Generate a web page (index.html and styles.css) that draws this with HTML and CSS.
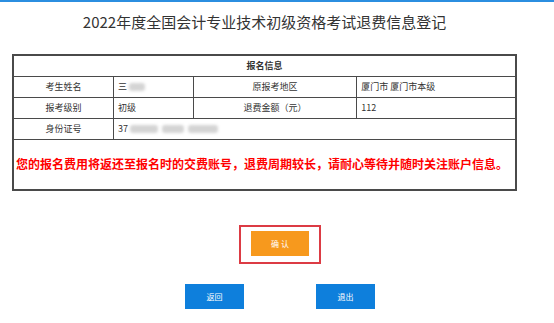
FILE: index.html
```html
<!DOCTYPE html>
<html lang="zh-CN">
  <head>
    <meta charset="UTF-8" />
    <meta name="viewport" content="width=device-width, initial-scale=1.0" />
    <title>退费信息登记</title>
    <link rel="stylesheet" href="styles.css">
  </head>
  <body>
    <div class="topbar"></div>
    <div class="page">
      <h1>2022年度全国会计专业技术初级资格考试退费信息登记</h1>
      <table class="info-table">
        <tr class="head-row">
          <td colspan="4">报名信息</td>
        </tr>
        <tr>
          <td class="label c1">考生姓名</td>
          <td class="c2">三<span class="blur w1"></span></td>
          <td class="label c3">原报考地区</td>
          <td class="c4">厦门市 厦门市本级</td>
        </tr>
        <tr>
          <td class="label">报考级别</td>
          <td>初级</td>
          <td class="label">退费金额（元）</td>
          <td>112</td>
        </tr>
        <tr>
          <td class="label">身份证号</td>
          <td colspan="3">37<span class="blur w2"></span><span class="blur w3"></span><span class="blur w4"></span></td>
        </tr>
        <tr class="msg-row">
          <td colspan="4">您的报名费用将返还至报名时的交费账号，退费周期较长，请耐心等待并随时关注账户信息。</td>
        </tr>
      </table>
    </div>

    <div class="actions">
      <div class="confirm-box">
        <button class="btn confirm-btn">确 认</button>
      </div>
      <div class="nav-btns">
        <button class="btn blue-btn">返回</button>
        <button class="btn blue-btn">退出</button>
      </div>
    </div>
  </body>
</html>
```

FILE: styles.css
```css
* {
  margin: 0;
  padding: 0;
  box-sizing: border-box;
}

body {
  font-family: "Noto Sans CJK SC", "Noto Sans", sans-serif;
  background-color: #fff;
  color: #333;
}

.topbar {
  height: 2px;
  background-color: #2b8ee0;
}

.page {
  width: 529px;
}

h1 {
  text-align: center;
  font-size: 15px;
  font-weight: normal;
  line-height: 20px;
  color: #333;
  margin: 10px 0 22px;
}

.info-table {
  width: 505px;
  margin-left: 12px;
  border-collapse: collapse;
  border: 2px solid #4a4a4a;
  font-size: 9px;
}

.info-table td {
  border: 1.5px solid #4a4a4a;
  height: 21px;
  padding: 0 4px;
  line-height: 12px;
}

.head-row td {
  text-align: center;
  font-weight: bold;
}

.label {
  text-align: center;
}

.c1 { width: 101px; }
.c2 { width: 80px; }
.c3 { width: 164px; }
.c4 { width: 160px; }

.blur {
  display: inline-block;
  height: 8px;
  vertical-align: middle;
  background-color: #d4d4d4;
  border-radius: 3px;
  filter: blur(1.5px);
}

.w1 { width: 16px; margin-left: 2px; }
.w2 { width: 28px; margin-left: 2px; }
.w3 { width: 22px; margin-left: 4px; }
.w4 { width: 30px; margin-left: 4px; }

.msg-row td {
  height: 51px;
  padding: 0 2px;
  color: #f00;
  font-size: 12px;
  font-weight: bold;
  white-space: nowrap;
}

.actions {
  display: flex;
  flex-direction: column;
  align-items: center;
  padding-left: 6px;
  margin-top: 34px;
}

.confirm-box {
  border: 2px solid #dc3b44;
  padding: 4px 10px 6px;
}

.btn {
  display: block;
  width: 58px;
  height: 25px;
  border: none;
  color: #fff;
  font-family: "Noto Sans CJK SC", sans-serif;
  font-size: 8px;
  cursor: pointer;
}

.confirm-btn {
  background-color: #f7991d;
}

.nav-btns {
  display: flex;
  gap: 72px;
  margin-top: 20px;
}

.blue-btn {
  width: 59px;
  background-color: #0e7fdc;
}
```
